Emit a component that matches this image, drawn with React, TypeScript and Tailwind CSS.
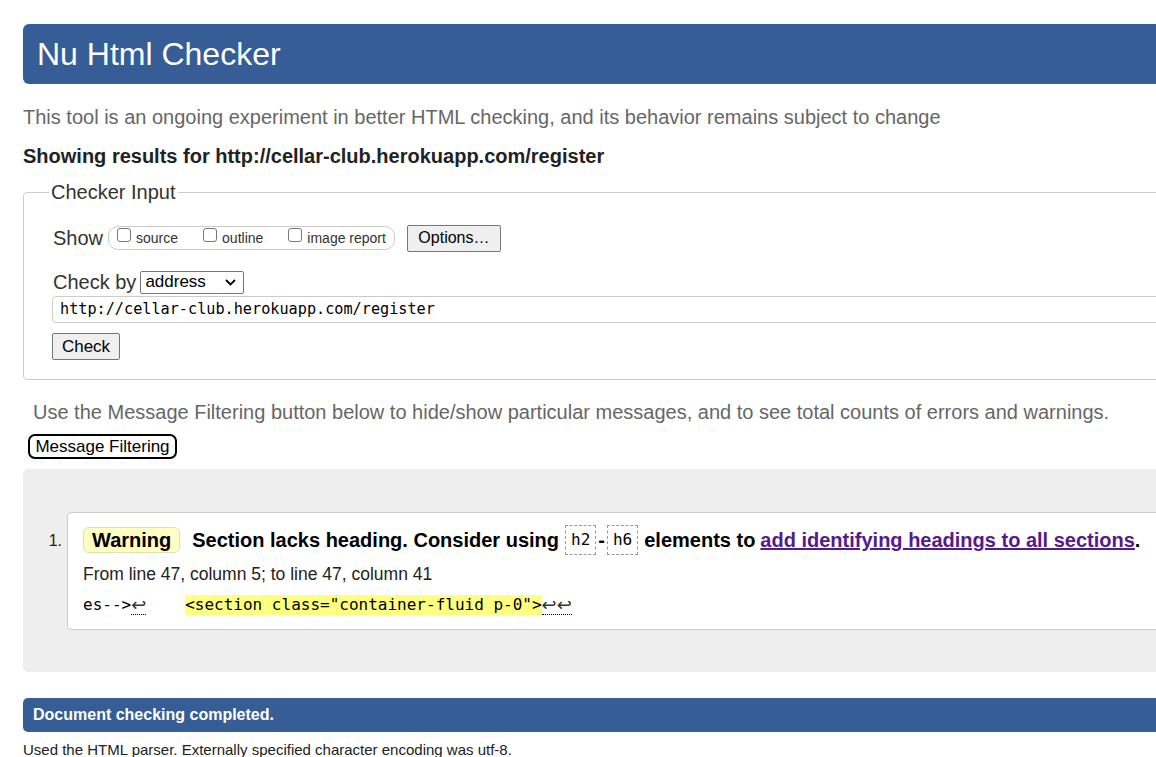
import React from "react";

const sans = { fontFamily: '"Liberation Sans", Arial, sans-serif' };
const mono = { fontFamily: '"DejaVu Sans Mono", "Liberation Mono", monospace' };

function Cb() {
  return <span className="inline-block w-[14px] h-[14px] border border-[#767676] rounded-[3px] bg-white mr-[5px] relative top-[-3px]" />;
}

export default function App() {
  return (
    <div className="w-[1156px] h-[757px] overflow-hidden bg-white text-[#222]" style={sans}>
      <div className="w-[1200px] pl-[23px] pt-[24px]">
        <div className="h-[60px] bg-[#365d95] rounded-[6px] flex items-center pl-[14px]">
          <h1 className="text-[32px] text-white leading-none">Nu Html Checker</h1>
        </div>
        <p className="mt-[22px] text-[20px] leading-[22px] text-[#666]">
          This tool is an ongoing experiment in better HTML checking, and its behavior remains subject to change
        </p>
        <p className="mt-[17px] text-[20px] leading-[22px] font-bold text-[#222]">
          Showing results for http://cellar-club.herokuapp.com/register
        </p>
        <fieldset className="mt-[13px] border border-[#ccc] rounded-[4px] pl-[29px] pb-[19px]">
          <legend className="ml-[-4px] px-[2px] text-[20px] leading-[24px] text-[#333]">Checker Input</legend>
          <div className="flex items-center h-[28px] mt-[20px]">
            <span className="text-[20px] text-[#333] mr-[5px]">Show</span>
            <div className="flex items-center h-[24px] border border-[#ccc] rounded-[10px] pl-[8px] pr-[8px] text-[14px] text-[#333]">
              <label className="flex items-center mr-[25px]"><Cb /><span>source</span></label>
              <label className="flex items-center mr-[25px]"><Cb /><span>outline</span></label>
              <label className="flex items-center"><Cb /><span>image report</span></label>
            </div>
            <button className="ml-[12px] h-[27px] w-[94px] bg-[#efefef] border border-[#767676] rounded-[2px] text-[16px] text-black">Options…</button>
          </div>
          <div className="flex items-center h-[24px] mt-[18px]">
            <span className="text-[20px] text-[#333] mr-[4px]">Check by</span>
            <div className="h-[23px] w-[104px] border border-[#767676] rounded-[2px] flex items-center justify-between pl-[4px] pr-[7px] text-[17px] text-black">
              <span>address</span>
              <svg width="11" height="7" viewBox="0 0 11 7"><path d="M1 1l4.5 4.5L10 1" stroke="#000" strokeWidth="1.8" fill="none" /></svg>
            </div>
          </div>
          <div className="mt-[2px] ml-[-1px] h-[27px] border border-[#ccc] rounded-[4px] flex items-center pl-[7px] text-[15.2px] text-black" style={mono}>
            http://cellar-club.herokuapp.com/register
          </div>
          <button className="mt-[10px] ml-[-1px] h-[27px] w-[68px] bg-[#efefef] border border-[#767676] rounded-[2px] text-[17px] text-black">Check</button>
        </fieldset>
        <p className="mt-[21px] pl-[10px] text-[20px] leading-[22px] text-[#666]">
          Use the Message Filtering button below to hide/show particular messages, and to see total counts of errors and warnings.
        </p>
        <button className="mt-[11px] ml-[5px] h-[25px] w-[149px] border-2 border-black rounded-[7px] text-[17px] text-black leading-none flex items-center justify-center">
          Message Filtering
        </button>
        <div className="mt-[10px] h-[203px] bg-[#eeeeee] rounded-[5px] pt-[43px]">
          <div className="flex">
            <span className="w-[44px] text-right pr-[5px] pt-[17px] text-[16px] text-[#222]">1.</span>
            <div className="flex-1 h-[118px] bg-white border border-[#ccc] rounded-[4px] pl-[15px] pt-[12px]">
              <div className="flex items-center h-[30px] text-[20px] font-bold text-black whitespace-nowrap">
                <span className="h-[26px] px-[8px] bg-[#ffffc4] border border-[#e0e0a8] rounded-[6px] flex items-center">Warning</span>
                <span className="ml-[12px]">Section lacks heading. Consider using</span>
                <code className="ml-[6px] h-[30px] px-[5px] border border-dashed border-[#999] flex items-center font-normal text-[16px]" style={mono}>h2</code>
                <span className="mx-[2px]">-</span>
                <code className="h-[30px] px-[5px] border border-dashed border-[#999] flex items-center font-normal text-[16px]" style={mono}>h6</code>
                <span className="ml-[6px]">elements to </span>
                <a className="ml-[5px] text-[#551a8b] underline">add identifying headings to all sections</a>
                <span>.</span>
              </div>
              <p className="mt-[9px] text-[17.5px] leading-[20px] text-[#222]">From line 47, column 5; to line 47, column 41</p>
              <div className="mt-[11px] text-[16px] leading-[20px] text-black whitespace-pre flex items-end" style={mono}>
                <span>es--&gt;</span>
                <span className="border-b border-dotted border-black leading-[19px] text-[18px] text-[#333] w-[15px] text-center" style={{ fontFamily: '"DejaVu Sans", sans-serif' }}>↩</span>
                <span className="w-[39px]"></span>
                <span className="bg-[#ffff80]">&lt;section class="container-fluid p-0"&gt;</span>
                <span className="border-b border-dotted border-black leading-[19px] text-[18px] text-[#333] w-[30px] text-center" style={{ fontFamily: '"DejaVu Sans", sans-serif' }}>↩↩</span>
              </div>
            </div>
          </div>
        </div>
        <div className="mt-[26px] h-[34px] bg-[#365d95] rounded-[5px] flex items-center pl-[10px]">
          <span className="text-[16px] font-bold text-white">Document checking completed.</span>
        </div>
        <p className="mt-[10px] text-[15px] leading-[16px] text-[#222]">Used the HTML parser. Externally specified character encoding was utf-8.</p>
      </div>
    </div>
  );
}
